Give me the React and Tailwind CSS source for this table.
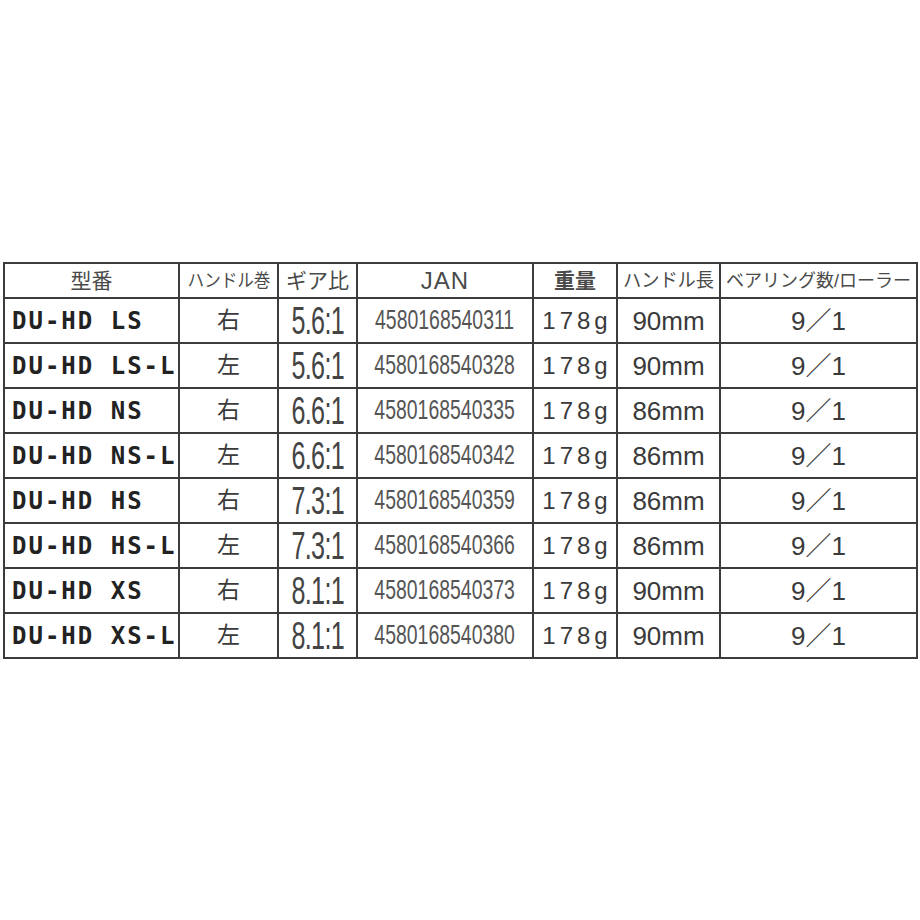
import React from "react";

const rows = [
  ["DU-HD LS", "右", "5.6:1", "4580168540311", "90mm"],
  ["DU-HD LS-L", "左", "5.6:1", "4580168540328", "90mm"],
  ["DU-HD NS", "右", "6.6:1", "4580168540335", "86mm"],
  ["DU-HD NS-L", "左", "6.6:1", "4580168540342", "86mm"],
  ["DU-HD HS", "右", "7.3:1", "4580168540359", "86mm"],
  ["DU-HD HS-L", "左", "7.3:1", "4580168540366", "86mm"],
  ["DU-HD XS", "右", "8.1:1", "4580168540373", "90mm"],
  ["DU-HD XS-L", "左", "8.1:1", "4580168540380", "90mm"],
];

const jp = "font-['Liberation_Sans','Noto_Sans_CJK_JP',sans-serif]";

const App = () => {
  return (
    <div className="min-h-[920px] w-[920px] bg-white pt-[262px] pl-[3px]">
      <div className="inline-grid grid-cols-[173px_97px_77px_174px_82px_101px_195px] grid-rows-[33px_repeat(8,43px)] gap-[2px] bg-[#3c3c3c] p-[2px] leading-none">
        {/* Header */}
        <div className={`bg-white flex items-center justify-center text-[21px] text-[#4a4a4a] ${jp}`}>
          型番
        </div>
        <div className={`bg-white flex items-center justify-center text-[18px] text-[#4a4a4a] whitespace-nowrap ${jp}`}>
          <span className="inline-block scale-x-[0.92]">ハンドル巻</span>
        </div>
        <div className={`bg-white flex items-center justify-center text-[21px] text-[#4a4a4a] whitespace-nowrap ${jp}`}>
          ギア比
        </div>
        <div className={`bg-white flex items-center justify-center text-[24px] text-[#4a4a4a] tracking-[1px] ${jp}`}>
          JAN
        </div>
        <div className={`bg-white flex items-center justify-center text-[21px] font-bold text-[#4a4a4a] ${jp}`}>
          重量
        </div>
        <div className={`bg-white flex items-center justify-center text-[19px] text-[#4a4a4a] whitespace-nowrap ${jp}`}>
          <span className="inline-block scale-x-[0.96]">ハンドル長</span>
        </div>
        <div className={`bg-white flex items-center justify-center text-[18px] text-[#4a4a4a] whitespace-nowrap ${jp}`}>
          ベアリング数/ローラー
        </div>

        {/* Rows */}
        {rows.map((r) => (
          <React.Fragment key={r[0]}>
            <div className="bg-white flex items-center pl-[7px] text-[24px] font-bold tracking-[2px] text-[#222] whitespace-nowrap font-['DejaVu_Sans_Mono',monospace]">
              {r[0]}
            </div>
            <div className={`bg-white flex items-center justify-center text-[23px] text-[#3a3a3a] ${jp}`}>
              {r[1]}
            </div>
            <div className={`bg-white flex items-center justify-center text-[38px] text-[#444] whitespace-nowrap ${jp}`}>
              <span className="inline-block scale-x-[0.66] tracking-[-1px]">{r[2]}</span>
            </div>
            <div className={`bg-white flex items-center justify-center text-[27px] text-[#555] whitespace-nowrap ${jp}`}>
              <span className="inline-block scale-x-[0.72]">{r[3]}</span>
            </div>
            <div className={`bg-white flex items-center justify-center text-[24px] text-[#3a3a3a] tracking-[4px] whitespace-nowrap ${jp}`}>
              <span className="pl-[4px]">178g</span>
            </div>
            <div className={`bg-white flex items-center justify-center text-[26px] text-[#3a3a3a] whitespace-nowrap ${jp}`}>
              {r[4]}
            </div>
            <div className={`bg-white flex items-center justify-center text-[26px] text-[#3a3a3a] whitespace-nowrap ${jp}`}>
              9／1
            </div>
          </React.Fragment>
        ))}
      </div>
    </div>
  );
};

export default App;
